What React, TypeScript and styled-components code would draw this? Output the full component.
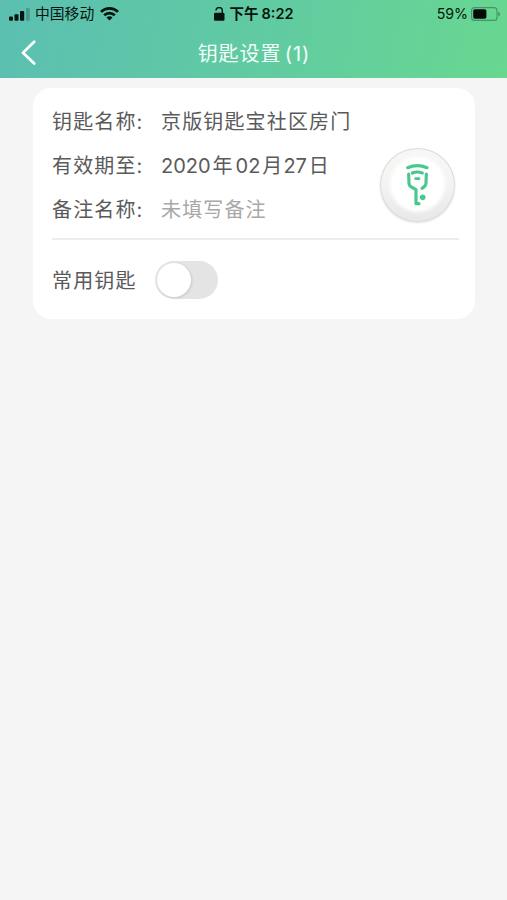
import React, { useState } from 'react';
import styled, { createGlobalStyle } from 'styled-components';

const GlobalStyle = createGlobalStyle`
  * { box-sizing: border-box; }
  body {
    margin: 0;
    background: #f5f5f5;
    font-family: Inter, 'Noto Sans CJK SC', sans-serif;
    color: #5a5a5a;
  }
`;

const Screen = styled.div`
  min-height: 900px;
  background: #f5f5f5;
`;

const Header = styled.header`
  height: 78px;
  background: linear-gradient(100deg, #5bbfb1 0%, #60c9a4 45%, #68d790 100%);
`;

const StatusBar = styled.div`
  display: grid;
  grid-template-columns: 1fr auto 1fr;
  align-items: center;
  height: 28px;
  padding: 0 6px 0 9px;
  color: #06150f;
  font-size: 15px;
  line-height: 28px;
  white-space: nowrap;
`;

const StatusGroup = styled.div<{ $end?: boolean }>`
  display: flex;
  align-items: center;
  justify-content: ${(p) => (p.$end ? 'flex-end' : 'flex-start')};
`;

const Carrier = styled.span`
  margin: 0 6px 0 5px;
  font-size: 14.8px;
`;

const Clock = styled.span`
  margin: 0 2px 0 4px;
  font-size: 14.5px;
  font-weight: 600;
  word-spacing: -0.5px;
`;

const Battery = styled.span`
  margin-right: 3px;
  font-size: 14.2px;
`;

const TitleBar = styled.div`
  display: grid;
  grid-template-columns: 60px 1fr 60px;
  align-items: center;
  height: 50px;
`;

const BackButton = styled.button`
  display: flex;
  padding: 0 0 0 20px;
  border: 0;
  background: none;
`;

const Title = styled.h1`
  margin: 0;
  padding: 2px 0 0 1px;
  color: #f2fff8;
  font-size: 20px;
  font-weight: 400;
  line-height: 48px;
  letter-spacing: 0.9px;
  word-spacing: -3px;
  text-align: center;
`;

const Card = styled.main`
  width: 442px;
  height: 231px;
  margin: 10px 0 0 33px;
  padding: 10px 16px 0 19px;
  border-radius: 18px;
  background: #fff;
`;

const Details = styled.section`
  display: flex;
  justify-content: space-between;
  height: 142px;
  border-bottom: 2px solid #ededed;
`;

const Fields = styled.dl`
  margin: 0;
  padding-top: 1px;
`;

const Field = styled.div`
  display: flex;
  height: 44px;
  font-size: 20px;
  line-height: 46px;
  letter-spacing: 1.15px;
  white-space: nowrap;
`;

const Label = styled.dt`
  width: 109px;
`;

const Value = styled.dd<{ $muted?: boolean }>`
  margin: 0;
  color: ${(p) => (p.$muted ? '#a8a8a8' : 'inherit')};
`;

const DateNumber = styled.span<{ $gap?: number }>`
  margin-left: ${(p) => p.$gap ?? 0}px;
  margin-right: 1.8px;
  letter-spacing: 0;
`;

const KeyBadge = styled.div`
  display: flex;
  justify-content: center;
  width: 75px;
  height: 74px;
  margin: 50px 4px 0 0;
  padding: 14px 2px 0 0;
  border: 1.5px solid #dcdbdc;
  border-radius: 50%;
  background:
    radial-gradient(circle at 50% 49%, #fff 0 25px, rgba(255, 255, 255, 0) 30px),
    linear-gradient(180deg, #f8f7f6 0%, #f5f4f3 45%, #e8e8e8 100%);
  box-shadow: 0 1px 2px rgba(0, 0, 0, 0.14);
`;

const Setting = styled.section`
  display: flex;
  align-items: center;
  height: 79px;
  font-size: 20px;
  letter-spacing: 1.15px;
`;

const Toggle = styled.button<{ $on: boolean }>`
  display: flex;
  align-items: center;
  justify-content: ${(p) => (p.$on ? 'flex-end' : 'flex-start')};
  width: 63px;
  height: 38px;
  margin-left: 18px;
  padding: 2px;
  border: 0;
  border-radius: 19px;
  background: ${(p) => (p.$on ? '#68d990' : '#e4e4e4')};
`;

const Thumb = styled.span`
  width: 34px;
  height: 34px;
  border-radius: 50%;
  background: #fff;
  box-shadow: 1px 1px 3px rgba(0, 0, 0, 0.12);
`;

const SignalIcon = () => (
  <svg width="21" height="13" viewBox="0 0 21 13" fill="#06150f">
    <rect x="0" y="8.5" width="4" height="4.2" rx="1" />
    <rect x="5.5" y="6.2" width="4" height="6.5" rx="1" />
    <rect x="11" y="3" width="4.2" height="9.7" rx="1" />
    <rect x="17" y="0" width="3.8" height="12.7" rx="1" opacity=".22" />
  </svg>
);

const WifiIcon = () => (
  <svg width="19" height="14" viewBox="0 0 19 14" fill="none" stroke="#06150f" strokeWidth="2.7">
    <path d="M1 4.9C5.8.3 13.2.3 18 4.9" />
    <path d="M4.2 8.2c3-2.9 7.6-2.9 10.6 0" />
    <path d="M6.5 10.4c1.7-1.6 4.3-1.6 6 0l-3 3.1z" fill="#06150f" stroke="none" />
  </svg>
);

const LockIcon = () => (
  <svg width="11" height="15" viewBox="0 0 11 15">
    <rect x="0" y="5.7" width="10.5" height="8" rx="1.3" fill="#06150f" />
    <path d="M2 3.5v-.2a3.1 2.8 0 0 1 6.3 0V6" fill="none" stroke="#06150f" strokeWidth="1.4" />
  </svg>
);

const BatteryIcon = () => (
  <svg width="30" height="14" viewBox="0 0 30 14">
    <rect x=".6" y=".6" width="25.4" height="12.8" rx="3" fill="none" stroke="#43936c" strokeWidth="1.1" />
    <rect x="2.2" y="2.3" width="13.2" height="9.4" rx="1.6" fill="#040b07" />
    <path d="M27.3 4.7c2.3.8 2.3 3.8 0 4.6z" fill="#43936c" />
  </svg>
);

const BackIcon = () => (
  <svg width="17" height="26" viewBox="0 0 17 26" fill="none" stroke="#fff" strokeWidth="2.7" strokeLinecap="round" strokeLinejoin="round">
    <path d="M14.2 1.7 3 12.7l11.2 10.8" />
  </svg>
);

const KeyIcon = () => (
  <svg width="24" height="43" viewBox="119 98 72 129" fill="none" stroke="#4bc78e" strokeWidth="9.5" strokeLinecap="round">
    <path d="M127 112q29-12 58 0" />
    <path d="M141 128q15-6 30 0" />
    <path d="M130 131l1 28q1 9 9 12l12 7v42h9" strokeLinejoin="round" />
    <path d="M183 131l-1 28q-1 9-12 15" />
    <path d="M151 145h10" strokeWidth="8" />
    <circle cx="172" cy="201" r="8.5" fill="#4bc78e" stroke="none" />
  </svg>
);

export default function App() {
  const [favorite, setFavorite] = useState(false);
  return (
    <Screen>
      <GlobalStyle />
      <Header>
        <StatusBar>
          <StatusGroup>
            <SignalIcon />
            <Carrier>中国移动</Carrier>
            <WifiIcon />
          </StatusGroup>
          <StatusGroup>
            <LockIcon />
            <Clock>下午 8:22</Clock>
          </StatusGroup>
          <StatusGroup $end>
            <Battery>59%</Battery>
            <BatteryIcon />
          </StatusGroup>
        </StatusBar>
        <TitleBar>
          <BackButton aria-label="返回">
            <BackIcon />
          </BackButton>
          <Title>钥匙设置 (1)</Title>
        </TitleBar>
      </Header>
      <Card>
        <Details>
          <Fields>
            <Field>
              <Label>钥匙名称:</Label>
              <Value>京版钥匙宝社区房门</Value>
            </Field>
            <Field>
              <Label>有效期至:</Label>
              <Value>
                <DateNumber>2020</DateNumber>年<DateNumber $gap={2}>02</DateNumber>月<DateNumber>27</DateNumber>日
              </Value>
            </Field>
            <Field>
              <Label>备注名称:</Label>
              <Value $muted>未填写备注</Value>
            </Field>
          </Fields>
          <KeyBadge>
            <KeyIcon />
          </KeyBadge>
        </Details>
        <Setting>
          常用钥匙
          <Toggle $on={favorite} role="switch" aria-checked={favorite} aria-label="常用钥匙" onClick={() => setFavorite(!favorite)}>
            <Thumb />
          </Toggle>
        </Setting>
      </Card>
    </Screen>
  );
}
